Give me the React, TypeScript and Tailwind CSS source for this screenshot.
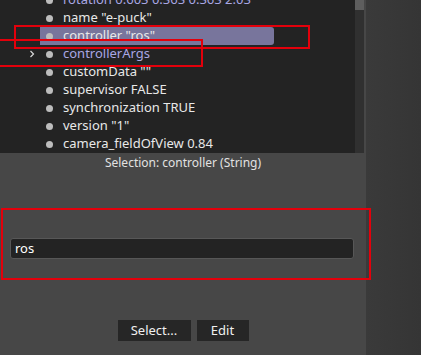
import React from "react";

type Row = { label: string; tone?: "link"; arrow?: boolean; selected?: boolean };

const rows: Row[] = [
  { label: "rotation 0.603 0.363 0.363 2.03", tone: "link" },
  { label: 'name "e-puck"' },
  { label: 'controller "ros"', selected: true },
  { label: "controllerArgs", tone: "link", arrow: true },
  { label: 'customData ""' },
  { label: "supervisor FALSE" },
  { label: "synchronization TRUE" },
  { label: 'version "1"' },
  { label: "camera_fieldOfView 0.84" },
];

const TreeRow = ({ row }: { row: Row }) => (
  <div className="flex items-center h-[18px] pl-[28px] shrink-0">
    <span className="w-[12px] flex items-center">
      {row.arrow && (
        <svg width="6" height="8" viewBox="0 0 6 8" className="ml-[1px]">
          <polyline points="1.5,1 4.5,4 1.5,7" fill="none" stroke="#d8d8d8" strokeWidth="1.2" />
        </svg>
      )}
    </span>
    <div
      className={`flex items-center h-[18px] pl-[6px] ${
        row.selected ? "bg-[#78759c] w-[234px] rounded-r-[3px]" : ""
      }`}
    >
      <span className="w-[7px] h-[7px] rounded-full bg-[#bdbdbd] shrink-0" />
      <span
        className={`ml-[10px] whitespace-nowrap ${
          row.tone === "link" ? "text-[#a9a7e3]" : "text-[#e8e8e8]"
        }`}
      >
        {row.label}
      </span>
    </div>
  </div>
);

export default function App() {
  return (
    <div
      className="relative w-[421px] h-[355px] flex overflow-hidden text-[13px]"
      style={{ fontFamily: '"Noto Sans", "Open Sans", sans-serif' }}
    >
      <div className="w-[366px] flex flex-col bg-[#474747]">
        <div className="h-[153px] flex shrink-0">
          <div className="w-[355px] bg-[#232323] overflow-hidden">
            <div className="flex flex-col mt-[-9px]">
              {rows.map((r) => (
                <TreeRow key={r.label} row={r} />
              ))}
            </div>
          </div>
          <div className="w-[9px] bg-[#303030] flex flex-col">
            <div className="h-[10px] bg-[#5e5e5e]" />
          </div>
        </div>
        <div className="text-center text-[#e2e2e2] text-[12px] leading-[20px]">
          Selection: controller (String)
        </div>
        <div className="mt-[65px] px-[10px] pr-[12px]">
          <div className="h-[21px] bg-[#232323] border border-[#575757] rounded-[3px] flex items-center pl-[4px] text-white">
            ros
          </div>
        </div>
        <div className="mt-[61px] flex justify-center gap-[6px]">
          <button className="w-[73px] h-[21px] bg-[#262626] text-[#f0f0f0] text-[13px] leading-none">
            Select...
          </button>
          <button className="w-[52px] h-[21px] bg-[#262626] text-[#f0f0f0] text-[13px] leading-none">
            Edit
          </button>
        </div>
      </div>
      <div className="flex-1 bg-gradient-to-r from-[#3a3a3a] to-[#353535]" />

      {/* annotation boxes */}
      <div className="absolute left-[14px] top-[25px] w-[296px] h-[24px] border-2 border-[#e3000b]" />
      <div className="absolute left-[-2px] top-[39px] w-[205px] h-[28px] border-2 border-[#e3000b]" />
      <div className="absolute left-[1px] top-[208px] w-[370px] h-[72px] border-2 border-[#e3000b]" />
    </div>
  );
}
